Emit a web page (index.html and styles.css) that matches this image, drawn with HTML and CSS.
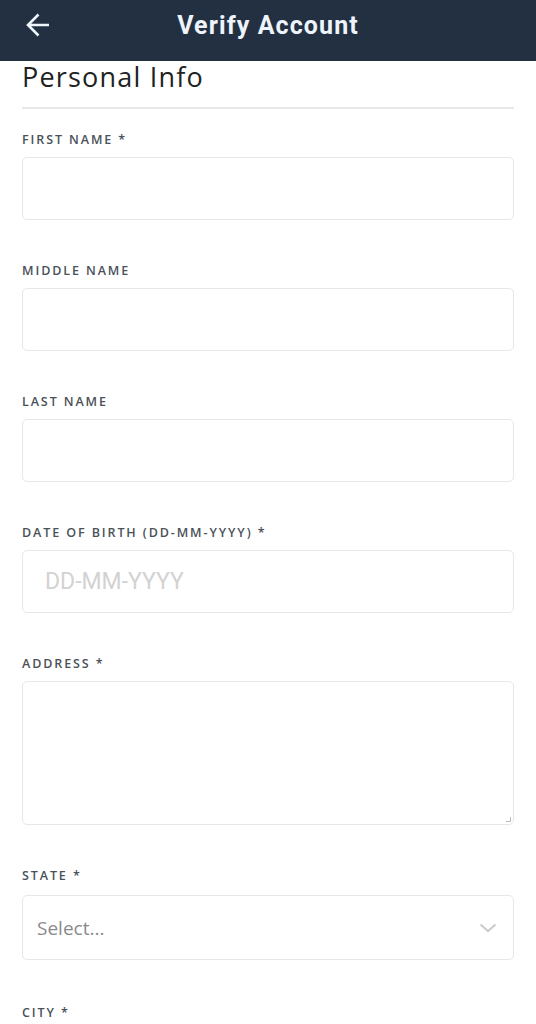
FILE: index.html
```html
<!DOCTYPE html>
<html>
<head>
<meta charset="utf-8">
<link rel="stylesheet" href="styles.css">
</head>
<body>
<header class="topbar">
  <span class="back">
    <svg width="26" height="26" viewBox="0 0 26 26"><path d="M3 13H24M13.5 2.5L3 13l10.5 10.5" fill="none" stroke="#eef4fb" stroke-width="2.6"/></svg>
  </span>
  <h1 class="title">Verify Account</h1>
</header>
<main class="content">
  <h2 class="section-title">Personal Info</h2>
  <div class="field">
    <label class="label">FIRST NAME *</label>
    <div class="input"></div>
  </div>
  <div class="field">
    <label class="label">MIDDLE NAME</label>
    <div class="input"></div>
  </div>
  <div class="field">
    <label class="label">LAST NAME</label>
    <div class="input"></div>
  </div>
  <div class="field">
    <label class="label">DATE OF BIRTH (DD-MM-YYYY) *</label>
    <div class="input"><span class="placeholder">DD-MM-YYYY</span></div>
  </div>
  <div class="field">
    <label class="label">ADDRESS *</label>
    <div class="input textarea"><span class="grip"></span></div>
  </div>
  <div class="field">
    <label class="label">STATE *</label>
    <div class="input select"><span class="select-text">Select...</span>
      <svg width="18" height="10" viewBox="0 0 18 10"><path d="M1.5 1.5 L9 8 L16.5 1.5" fill="none" stroke="#cccccc" stroke-width="2.2"/></svg>
    </div>
  </div>
  <div class="field city">
    <label class="label">CITY *</label>
    <div class="input"></div>
  </div>
</main>
</body>
</html>
```
FILE: styles.css
```css
html, body { margin: 0; padding: 0; background: #fff; }
body { font-family: "Open Sans", "Noto Sans", sans-serif; overflow: hidden; height: 1024px; }
.topbar {
  height: 61px;
  background: #223041;
  display: flex;
  align-items: center;
  justify-content: center;
  position: relative;
}
.back { position: absolute; left: 25px; top: 12px; display: flex; }
.title {
  margin: 0;
  font-family: Roboto, sans-serif;
  font-weight: 700;
  font-size: 25px;
  letter-spacing: 1.1px;
  color: #eef4fb;
  line-height: 1;
  margin-top: -11px;
}
.content { padding: 0 22px; }
.section-title {
  margin: 0;
  font-weight: 400;
  font-size: 27px;
  letter-spacing: 1.2px;
  color: #222;
  line-height: 32px;
  padding-bottom: 14px;
  border-bottom: 2px solid #e8e8e8;
}
.field { display: flex; flex-direction: column; }
.label {
  font-size: 12.5px;
  font-weight: 600;
  letter-spacing: 1.9px;
  color: #4a5159;
  line-height: 16px;
  margin-top: 23px;
  margin-bottom: 9px;
}
.field + .field .label { margin-top: 43px; }
.field.city .label { margin-top: 45px; }
.input {
  height: 61px;
  border: 1px solid #e6e7e9;
  border-radius: 5px;
  display: flex;
  align-items: center;
  position: relative;
}
.placeholder {
  font-family: Roboto, sans-serif;
  font-size: 23px;
  color: #d2d2d2;
  padding-left: 22px;
}
.textarea { height: 142px; }
.grip {
  position: absolute; right: 2px; bottom: 2px;
  width: 4px; height: 4px;
  border-right: 1px solid #bbb; border-bottom: 1px solid #bbb;
}
.field + .field .select { margin-top: 2px; }
.select { height: 63px; justify-content: space-between; padding: 0 16px 0 14px; }
.select-text { font-size: 19px; color: #8a8a8a; }
```
